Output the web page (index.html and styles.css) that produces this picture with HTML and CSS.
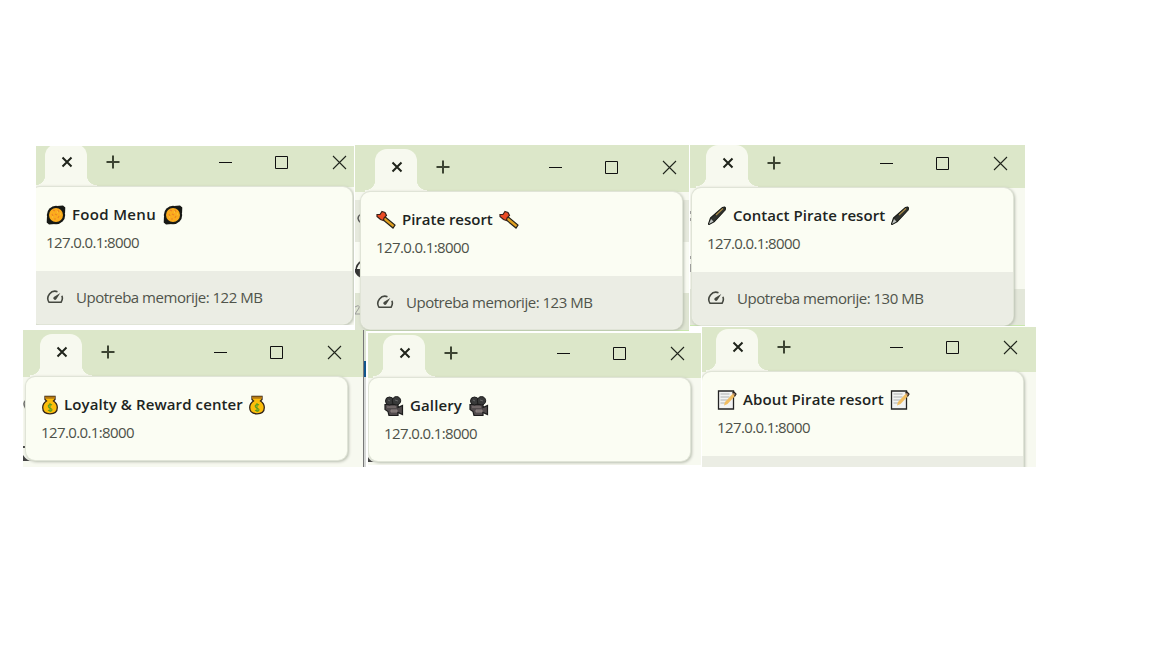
FILE: index.html
```
<!DOCTYPE html>
<html lang="hr">
<head>
<meta charset="utf-8">
<title>Pirate resort</title>
<link rel="stylesheet" href="styles.css">
</head>
<body>
<svg class="defs" width="0" height="0">
  <symbol id="controls" viewBox="0 0 300 22">
    <g fill="none">
      <path d="M6.5 6.5l9 9M15.5 6.5l-9 9" stroke="#20241b" stroke-width="2"/>
      <path d="M57 4.5v13M50.500 11h13" stroke="#3d4533" stroke-width="2"/>
      <path d="M163 11.500h13" stroke="#111"/>
      <path d="M219.500 5.500h12v12h-12z" stroke="#111"/>
      <path d="M277 5l13 13M290 5l-13 13" stroke="#20251c" stroke-width="1.100"/>
    </g>
  </symbol>
  <symbol id="gauge" viewBox="0 0 18 14">
    <path d="M11.500 1.700A7.200 7.200 0 0 0 2.900 12.200h12.200a7.200 7.200 0 0 0 .8-6.500" fill="none" stroke="#454840" stroke-width="1.600" stroke-linejoin="round"/>
    <path d="M14.300 3L10.300 9.200a1.700 1.700 0 1 1-2.500-2.300z" fill="#454840"/>
  </symbol>
  <symbol id="food" viewBox="0 0 20 20">
    <path d="M11 1l6-.5 2.300 2L19 9zM9 19l-6 .5-2.300-2L1 11z" fill="#171915"/>
    <circle cx="10" cy="10" r="9.200" fill="#171915"/>
    <circle cx="10" cy="10" r="7" fill="#fbac1d"/>
    <path d="M7 5l2 1M12 5l1 2M6 9l1 2M9 9l2 1M13 11l-1 2M8 14l2 0" stroke="#ec8424" stroke-width="1.200"/>
    <path d="M11 7h1M6 12h1M14 9h1" stroke="#f6d047"/>
  </symbol>
  <symbol id="axe" viewBox="0 0 20 20">
    <path d="M8 6l11 9-2 3L6 9z" fill="#e0a020" stroke="#27231b" stroke-width="1.200"/>
    <path d="M6 1.500l3 1 1.500 3-2.500 2.500-.5 2.500-3-1L1 6.500l0-2 3 0z" fill="#ec4b23" stroke="#3a2018" stroke-width="1.200"/>
  </symbol>
  <symbol id="pen" viewBox="0 0 20 20">
    <path d="M15.500 1.500l2-.5 1 1-.3 2L7.500 15.500l-5.500 3-.5-.5 2-6z" fill="#30332e" stroke="#171915" stroke-width="1.100" stroke-linejoin="round"/>
    <path d="M2 18l2-5 2.500 2.500z" fill="#bfc3c1"/>
    <path d="M9 9l7-6.500" stroke="#aa8c4b" stroke-width="1.200"/>
  </symbol>
  <symbol id="bag" viewBox="0 0 16 20">
    <path d="M3 1.500h10v3l-1.500 1.500c3 2 3.800 4 3.800 6.500 0 4-3 6.300-7.300 6.300S.7 16.500.7 12.500C.7 10 1.500 8 4.500 6L3 4.500z" fill="#fcbd0a" stroke="#332519" stroke-width="1.300"/>
    <path d="M3 1.500h10v2.300H3z" fill="#b57a14"/>
    <path d="M10 10C8 8.500 5.500 10 6.500 12s3.500 1 3.500 2.800-2.500 1.700-4 .4M8 8v9" fill="none" stroke="#5a9e20" stroke-width="1.100"/>
  </symbol>
  <symbol id="camera" viewBox="0 0 20 20">
    <path d="M1 8.500h13v3l4.500-2v9l-4.500-2v3H5l-1-4-3-2z" fill="#514b4c" stroke="#1c1c1c" stroke-width="1.200"/>
    <circle cx="5.500" cy="5" r="4" fill="#393a3a" stroke="#1c1c1c"/>
    <circle cx="12.500" cy="4.800" r="4.200" fill="#393a3a" stroke="#1c1c1c"/>
    <path d="M3 11h9M7 14h6v2H7z" stroke="#8d8180" fill="#77706f"/>
    <path d="M4 4l2 1M11 4l3 1" stroke="#666"/>
  </symbol>
  <symbol id="memo" viewBox="0 0 20 20">
    <path d="M1.500 1h15v18h-15z" fill="#f2f3f2" stroke="#232323" stroke-width="1.300"/>
    <path d="M3.500 4h9M3.500 7h9M3.500 10h7M3.500 13h6" stroke="#c5c7c8" stroke-width="1.300"/>
    <path d="M7 15.500l1-3.500 8-8.500 2.500 2-8 8.500z" fill="#f0bd61"/>
    <path d="M15.500 3l1.500-1 2 2-1.500 2.500" fill="#a98265" stroke="#292420" stroke-width="1.200"/>
  </symbol>
</svg>

<main class="canvas">
  <section class="window food-window">
    <div class="screen">
      <header class="titlebar"><div class="tab"></div><svg class="controls"><use href="#controls"/></svg></header>
      <div class="page"><article class="card">
        <div class="details"><h2><svg><use href="#food"/></svg><span class="w-food">Food Menu</span><svg><use href="#food"/></svg></h2><p>127.0.0.1:8000</p></div>
        <footer><svg><use href="#gauge"/></svg><span>Upotreba memorije: 122 MB</span></footer>
      </article></div>
    </div>
  </section>

  <section class="window resort-window">
    <div class="screen">
      <header class="titlebar"><div class="tab"></div><svg class="controls"><use href="#controls"/></svg></header>
      <div class="page banded">
        <svg class="fragments" width="8" height="140"><path d="M6 22q-6 4 0 9" fill="none" stroke="#555" stroke-width="1.500"/><path d="M7 69q-6 3-6 10" fill="none" stroke="#333" stroke-width="1.500"/><path d="M0 77h7v9q-5-1-7-6z" fill="#333"/><path d="M0 115q5-3 4 1l-4 6h5" fill="none" stroke="#999"/></svg>
        <article class="card">
        <div class="details"><h2><svg><use href="#axe"/></svg><span class="w-resort">Pirate resort</span><svg><use href="#axe"/></svg></h2><p>127.0.0.1:8000</p></div>
        <footer><svg><use href="#gauge"/></svg><span>Upotreba memorije: 123 MB</span></footer>
      </article></div>
    </div>
  </section>

  <section class="window contact-window">
    <div class="screen">
      <header class="titlebar"><div class="tab"></div><svg class="controls"><use href="#controls"/></svg></header>
      <div class="page lower-band"><svg class="fragments" width="8" height="140"><path d="M.5 23v3M.5 30v3M.5 68v3M.5 76v8" stroke="#999"/></svg><article class="card">
        <div class="details"><h2><svg><use href="#pen"/></svg><span class="w-contact">Contact Pirate resort</span><svg><use href="#pen"/></svg></h2><p>127.0.0.1:8000</p></div>
        <footer><svg><use href="#gauge"/></svg><span>Upotreba memorije: 130 MB</span></footer>
      </article></div>
    </div>
  </section>

  <section class="window loyalty-window">
    <div class="screen">
      <header class="titlebar"><div class="tab"></div><svg class="controls"><use href="#controls"/></svg></header>
      <div class="page"><svg class="fragments" width="12" height="90"><path d="M3 23q-4 3 0 9" fill="none" stroke="#666" stroke-width="1.500"/><path d="M0 69h2v2H0zM0 78q4 6 9 6H0z" fill="#444"/></svg><article class="card compact">
        <div class="details"><h2><svg class="narrow"><use href="#bag"/></svg><span class="w-loyalty">Loyalty &amp; Reward center</span><svg class="narrow"><use href="#bag"/></svg></h2><p>127.0.0.1:8000</p></div>
      </article></div>
    </div>
  </section>
  <div class="window-edge"></div>

  <section class="window gallery-window">
    <div class="screen">
      <header class="titlebar"><div class="tab"></div><svg class="controls"><use href="#controls"/></svg></header>
      <div class="page"><svg class="fragments" width="12" height="90"><path d="M0 79q3 5 7 5H0z" fill="#444"/></svg><article class="card compact">
        <div class="details"><h2><svg><use href="#camera"/></svg><span class="w-gallery">Gallery</span><svg><use href="#camera"/></svg></h2><p>127.0.0.1:8000</p></div>
      </article></div>
    </div>
  </section>

  <section class="window about-window">
    <div class="screen">
      <header class="titlebar"><div class="tab"></div><svg class="controls"><use href="#controls"/></svg></header>
      <div class="page"><article class="card">
        <div class="details"><h2><svg><use href="#memo"/></svg><span class="w-about">About Pirate resort</span><svg><use href="#memo"/></svg></h2><p>127.0.0.1:8000</p></div>
        <footer></footer>
      </article></div>
    </div>
  </section>
</main>
</body>
</html>
```
FILE: styles.css
```
* { box-sizing: border-box; }
body { margin: 0; background: #fff; font-family: "Open Sans", "Noto Sans", sans-serif; }
.defs { display: none; }
.canvas { position: relative; width: 1152px; height: 648px; overflow: hidden; }

/* Each window is a cropped view; --x/--y shift the full screen inside it. */
.window { position: absolute; overflow: hidden; background: #dce7c9; }
.screen { width: 360px; margin: var(--y) 0 0 var(--x); }
.food-window { left: 36px; top: 146px; width: 318px; height: 179px; --x: -9px; --y: -14px; }
.resort-window { left: 355px; top: 145px; width: 334px; height: 186px; --x: 2px; --y: -8px; }
.contact-window { left: 690px; top: 145px; width: 335px; height: 181px; --x: -2px; --y: -12px; }
.loyalty-window { left: 23px; top: 330px; width: 340px; height: 137px; --x: -1px; --y: -8px; }
.gallery-window { left: 368px; top: 333px; width: 333px; height: 132px; --x: -3px; --y: -10px; }
.about-window { left: 702px; top: 327px; width: 334px; height: 140px; --x: -4px; --y: -10px; }
.window-edge { position: absolute; left: 363px; top: 330px; width: 3px; height: 137px; border-left: 1px solid #777; background: linear-gradient(#dce3d2 31px, #10558c 31px 47px, #d7d9d7 47px); }

.titlebar { height: 55px; display: grid; }
.titlebar > * { grid-area: 1 / 1; }
.tab { width: 42px; height: 43px; margin: 12px 0 0 18px; border-radius: 12px 12px 0 0; background: #f7f9ef; display: flex; justify-content: space-between; align-items: flex-end; }
.tab::before, .tab::after { content: ""; flex: none; width: 10px; height: 12px; }
.tab::before { margin-left: -10px; background: radial-gradient(circle at 0 0, transparent 10px, #f7f9ef 10.500px); }
.tab::after { margin-right: -10px; background: radial-gradient(circle at 100% 0, transparent 10px, #f7f9ef 10.500px); }
.controls { width: 300px; height: 22px; margin: 19px 0 0 29px; }

.page { display: grid; height: 145px; margin-left: -10px; padding-left: 14px; background: #f7f9f0; }
.page > * { grid-area: 1 / 1; }
.banded { background: linear-gradient(#f7f9f0 8px, #e6e9dd 8px 50px, #f9fbf3 50px 101px, #dfe5d3 101px 138px, #c9e8ad 138px); }
.lower-band { background: linear-gradient(#f7f9f0 101px, #e3e7da 101px 137px, #c9e8ad 137px); }
.fragments { margin-left: -6px; }
.contact-window .fragments { margin-left: -2px; }
.loyalty-window .fragments { margin-left: -3px; }
.gallery-window .fragments { margin-left: -1px; }
.card { width: 321px; height: 137px; border-radius: 9px; background: #fbfdf3; overflow: hidden; box-shadow: 0 0 0 1px #e0e4d7, 1px 1px 3px 1px #b9beb0; z-index: 1; }
.compact { height: 83px; }
.details { height: 84px; padding: 17px 0 0 15px; }
h2, p { margin: 0; font-size: 15px; line-height: 21px; white-space: nowrap; }
h2 { display: flex; align-items: center; gap: 6px; color: #20241e; font-weight: 600; }
h2 svg { flex: none; width: 20px; height: 20px; }
h2 .narrow { width: 16px; margin-left: 1px; }
h2 span { flex: none; }
p { margin-top: 7px; color: #4d5148; letter-spacing: -.61px; }
.w-food { width: 85px; letter-spacing: .33px; }
.w-resort { width: 91px; letter-spacing: -.02px; }
.w-contact { width: 151px; letter-spacing: .05px; }
.w-loyalty { width: 178px; letter-spacing: .1px; }
.w-gallery { width: 53px; letter-spacing: .12px; }
.w-about { width: 141px; letter-spacing: .11px; }
footer { display: flex; align-items: center; height: 53px; gap: 12px; padding: 0 0 2px 15px; background: #ebede4; color: #50544b; font-size: 15px; letter-spacing: -.48px; white-space: nowrap; }
footer svg { width: 18px; height: 14px; margin-top: 1px; }
```
